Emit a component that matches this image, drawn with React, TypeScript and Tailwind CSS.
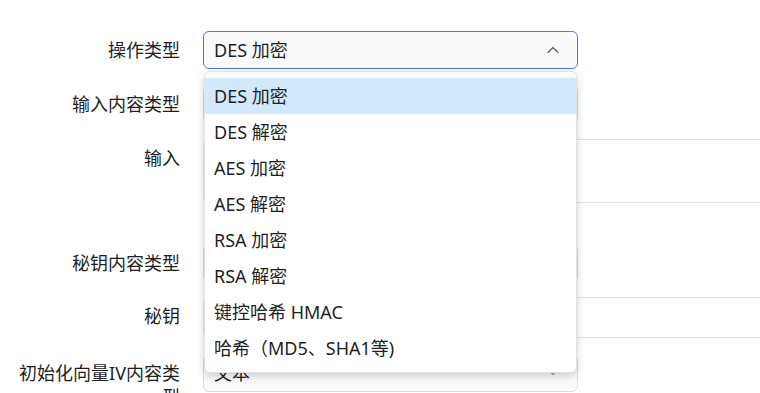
import { ChevronDown, ChevronUp } from "lucide-react";

const OPTIONS = [
  "DES 加密",
  "DES 解密",
  "AES 加密",
  "AES 解密",
  "RSA 加密",
  "RSA 解密",
  "键控哈希 HMAC",
  "哈希（MD5、SHA1等)",
];

const font = { fontFamily: '"Noto Sans", "Noto Sans CJK SC", sans-serif' };

function Label({ children }: { children: React.ReactNode }) {
  return <div className="pt-[7px] text-right text-[18px] leading-6 text-[#1f1f1f]">{children}</div>;
}

function Select({ value, open = false }: { value: string; open?: boolean }) {
  return (
    <div className="relative w-[375px]">
      <div
        className={
          open
            ? "flex h-[38px] items-center justify-between rounded-[6px] border border-[#3d7ef2] bg-[#fafafa] pl-[10px] pr-[14px]"
            : "flex h-[38px] items-center justify-between rounded-[6px] border border-[#dcdcdc] bg-[#fafafa] pl-[10px] pr-[18px]"
        }
      >
        <span className="text-[18px] text-[#1f1f1f]">{value}</span>
        {open ? (
          <ChevronUp size={20} strokeWidth={1.3} className="text-[#555]" />
        ) : (
          <ChevronDown size={12} strokeWidth={2} className="text-[#555]" />
        )}
      </div>
      {open && (
        <div className="absolute left-px right-px top-full z-10 mt-[2px] rounded-[6px] border border-[#e2e2e2] bg-white py-[6px] shadow-[0_3px_8px_rgba(0,0,0,0.18)]">
          {OPTIONS.map((o, i) => (
            <div
              key={o}
              className={
                i === 0
                  ? "flex h-9 items-center bg-[#d2e8fd] px-[9px] text-[18px] text-[#1f1f1f]"
                  : "flex h-9 items-center px-[9px] text-[18px] text-[#1f1f1f]"
              }
            >
              {o}
            </div>
          ))}
        </div>
      )}
    </div>
  );
}

export default function App() {
  return (
    <div className="h-[393px] w-[760px] overflow-hidden bg-white" style={font}>
      <div className="ml-[15px] grid w-[1000px] grid-cols-[165px_1fr] gap-x-[23px] pt-[31px]">
        <Label>操作类型</Label>
        <div className="relative z-20 mb-4">
          <Select value="DES 加密" open />
        </div>

        <Label>输入内容类型</Label>
        <div className="mb-4">
          <Select value="文本" />
        </div>

        <Label>输入</Label>
        <div className="mb-[41px]">
          <div className="h-16 w-[700px] rounded-[6px] border border-[#e2e2e2] bg-white" />
        </div>

        <Label>秘钥内容类型</Label>
        <div className="mb-[15px]">
          <Select value="文本" />
        </div>

        <Label>秘钥</Label>
        <div className="mb-4">
          <div className="h-[41px] w-[700px] rounded-[6px] border border-[#e2e2e2] bg-white" />
        </div>

        <Label>初始化向量IV内容类型</Label>
        <div className="mb-4">
          <Select value="文本" />
        </div>
      </div>
    </div>
  );
}
